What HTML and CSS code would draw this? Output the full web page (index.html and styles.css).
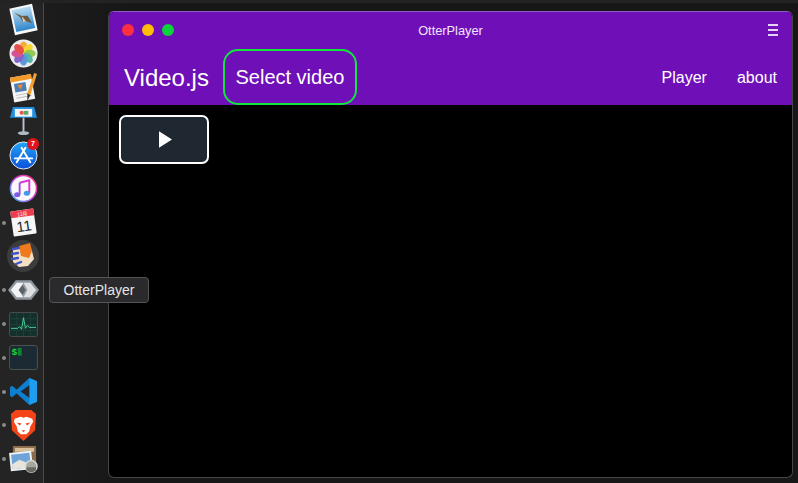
FILE: index.html
```html
<!DOCTYPE html>
<html lang="en">
<head>
<meta charset="utf-8">
<title>OtterPlayer</title>
<link rel="stylesheet" href="styles.css">
</head>
<body>
<div class="screen">
  <nav class="dock">
    <div class="dock-item"><svg class="icon" viewBox="0 0 30 32"><defs><linearGradient id="sky" x1="0" y1="0" x2="0" y2="1"><stop offset="0" stop-color="#b9dcf2"/><stop offset="1" stop-color="#2f86cc"/></linearGradient></defs><g transform="rotate(-12 15 16)"><rect x="3" y="2" width="24" height="28" fill="#f7f8fa"/><rect x="5" y="4" width="20" height="23" fill="url(#sky)"/><path d="M7 7l7 5 6 1 3 9-6-4-3 1-2-6z" fill="#6b5a43"/><path d="M14 12l3 6-3 1z" fill="#d9cdb6"/></g></svg></div>
    <div class="dock-item"><svg class="icon" viewBox="0 0 30 30"><circle cx="15" cy="15" r="14.500" fill="#ececec"/><g opacity=".9"><ellipse cx="15" cy="8.500" rx="4" ry="6" fill="#f6a623"/><ellipse cx="15" cy="8.500" rx="4" ry="6" fill="#f8d51c" transform="rotate(45 15 15)"/><ellipse cx="15" cy="8.500" rx="4" ry="6" fill="#8cc63f" transform="rotate(90 15 15)"/><ellipse cx="15" cy="8.500" rx="4" ry="6" fill="#45b39d" transform="rotate(135 15 15)"/><ellipse cx="15" cy="8.500" rx="4" ry="6" fill="#4a90d9" transform="rotate(180 15 15)"/><ellipse cx="15" cy="8.500" rx="4" ry="6" fill="#7b57c6" transform="rotate(225 15 15)"/><ellipse cx="15" cy="8.500" rx="4" ry="6" fill="#d6408f" transform="rotate(270 15 15)"/><ellipse cx="15" cy="8.500" rx="4" ry="6" fill="#e8403c" transform="rotate(315 15 15)"/></g></svg></div>
    <div class="dock-item"><svg class="icon" viewBox="0 0 30 32"><g transform="rotate(-10 13 17)"><rect x="3" y="4" width="22" height="26" fill="#f5f5f5"/><rect x="3" y="4" width="22" height="5" fill="#f09a2a"/><rect x="6" y="11" width="12" height="9" fill="#4a7fb8"/><path d="M9 13h6l-3 5z" fill="#f0872a"/><path d="M6 23h16M6 26h16" stroke="#bbb"/></g><path d="M26 1l3 1-7 22-3 3 0-5z" fill="#f0a030"/><path d="M19 22l3 2-3 6z" fill="#333"/></svg></div>
    <div class="dock-item"><svg class="icon" viewBox="0 0 30 32"><path d="M4 1h22l3 11H1z" fill="#1d8fe0"/><rect x="6" y="3" width="18" height="8" fill="#f2f4f6"/><circle cx="13" cy="7" r="2" fill="#e2574c"/><rect x="15" y="5" width="5" height="4" fill="#5aa86a"/><rect x="14" y="12" width="2" height="15" fill="#b9c2c9"/><ellipse cx="15" cy="28" rx="6" ry="2" fill="#aeb9c2"/></svg></div>
    <div class="dock-item"><svg class="icon" viewBox="0 0 30 30"><defs><linearGradient id="store" x1="0" y1="0" x2="0" y2="1"><stop offset="0" stop-color="#22a4f5"/><stop offset="1" stop-color="#0b50dc"/></linearGradient></defs><circle cx="15" cy="15" r="14" fill="url(#store)" stroke="#e8eef5"/><path d="M17 7L8 22M13 7l9 15M6 18h18" stroke="#fff" stroke-width="2" stroke-linecap="round" fill="none"/></svg><span class="badge">7</span></div>
    <div class="dock-item"><svg class="icon" viewBox="0 0 30 30"><defs><linearGradient id="ring" x1="0" y1="1" x2="1" y2="0"><stop offset="0" stop-color="#2fc3ee"/><stop offset=".5" stop-color="#c43ce0"/><stop offset="1" stop-color="#fb3c6a"/></linearGradient></defs><circle cx="15" cy="15" r="13.500" fill="#fbf7fb" stroke="url(#ring)" stroke-width="1.600"/><path d="M11 9l10-2.500v13.500" fill="none" stroke="#d63ad0" stroke-width="2"/><path d="M11 9v12" stroke="#9a50e0" stroke-width="2"/><ellipse cx="8.500" cy="21.500" rx="3.200" ry="2.600" fill="#7d5ce8"/><ellipse cx="18.500" cy="20" rx="3.200" ry="2.600" fill="#3f9ae8"/></svg></div>
    <div class="dock-item has-dot"><svg class="icon" viewBox="0 0 30 30"><g transform="rotate(-8 15 15)"><rect x="3" y="2" width="24" height="26" rx="1" fill="#f6f6f6"/><rect x="3" y="2" width="24" height="7" fill="#ef3b4e"/><text x="15" y="8" class="cal-month">12月</text><text x="15" y="24" class="cal-day">11</text></g></svg></div>
    <div class="dock-item"><svg class="icon icon-round" viewBox="0 0 32 32"><circle cx="16" cy="16" r="16" fill="#3c3c3c"/><path d="M6 9l16-4 3 6 2 8-6 7-9 1-6-5z" fill="#f4dfc4"/><path d="M12 6l11-3 2 8-3 7-8-2z" fill="#ee7a1e"/><path d="M6 9l6-1M5 14l6-1M5 19l6-1M9 24l5-2" stroke="#3d55c8" stroke-width="2.400" stroke-linecap="round"/></svg></div>
    <div class="dock-item has-dot"><svg class="icon icon-wide" viewBox="0 0 32 20"><path d="M8 0h16l8 10-8 10H8L0 10z" fill="#8f979e"/><path d="M9 2.500h7l-5 7.500 5 7.500H9L3 10z" fill="#f2f4f6"/><path d="M16 2.500h7l6 7.500-6 7.500h-7l4-7.500z" fill="#dde1e4"/><path d="M15 5l-4 5 4 5 3-5z" fill="#5a6066"/></svg></div>
    <div class="dock-item has-dot"><svg class="icon icon-term" viewBox="0 0 30 26"><rect x=".5" y=".5" width="29" height="25" rx="2" fill="#14302b" stroke="#4a4f50"/><path d="M1 7h28M1 13h28M1 19h28M8 1v24M15 1v24M22 1v24" stroke="#2a4a44" stroke-width=".6"/><path d="M2 17h7l2-2 2 3 2-12 2 11 2-3 2 2h7" stroke="#48d098" fill="none"/></svg></div>
    <div class="dock-item has-dot"><svg class="icon icon-term" viewBox="0 0 30 26"><rect x=".5" y=".5" width="29" height="25" rx="2.500" fill="#1b2a33" stroke="#4c5357"/><text x="2.500" y="10" class="term-prompt">$</text><rect x="9" y="3" width="4" height="8" fill="#0e8a2e"/></svg></div>
    <div class="dock-item has-dot"><svg class="icon" viewBox="0 0 30 30"><path d="M21 1l8 3.500v21L21 29 8 17l-5 4-2-1.500v-9L3 9l5 4z" fill="#0e7fcf"/><path d="M21 1l8 3.500v21L21 29z" fill="#1e9cf0"/><path d="M21 8.500L12 15l9 6.500z" fill="#23262a"/></svg></div>
    <div class="dock-item has-dot"><svg class="icon" viewBox="0 0 30 32"><path d="M7 0h16l5 4-1 17-12 11L3 21 2 4z" fill="#f4441a"/><path d="M6 9l6-2 3 1 3-1 6 2 1 3-3 5-1 5-3 3h-6l-3-3-1-5-3-5z" fill="#fff"/><path d="M8 13l5 1-2 2zM22 13l-5 1 2 2z" fill="#f4441a"/><path d="M13 21h4l-2 2z" fill="#f4441a"/></svg></div>
    <div class="dock-item has-dot"><svg class="icon" viewBox="0 0 30 30"><rect x="4" y="1" width="24" height="20" fill="#8a6a48"/><rect x="6" y="3" width="20" height="4" fill="#d8c09a"/><g transform="rotate(-6 13 17)"><rect x="1" y="7" width="23" height="19" fill="#eef2f5"/><rect x="3" y="9" width="19" height="15" fill="#6ea4d8"/><path d="M3 19l8-4 11 6v3H3z" fill="#e8e4da"/></g><circle cx="23" cy="22" r="6" fill="#a5a79f" stroke="#d8d8d8" stroke-width="1.500"/><path d="M18 23h10v3l-3 2h-4l-3-2z" fill="#6b6a62"/></svg></div>
  </nav>
  <div class="tooltip">OtterPlayer</div>
  <main class="window">
    <header class="header">
      <div class="titlebar">
        <div class="lights">
          <span class="light light-red"></span>
          <span class="light light-yellow"></span>
          <span class="light light-green"></span>
        </div>
        <div class="title">OtterPlayer</div>
        <div class="menu-icon"><span></span><span></span><span></span></div>
      </div>
      <div class="navbar">
        <a class="brand">Video.js</a>
        <a class="select-video">Select video</a>
        <div class="nav-right">
          <a class="nav-link">Player</a>
          <a class="nav-link">about</a>
        </div>
      </div>
    </header>
    <section class="player">
      <button class="play-button"><svg class="play-glyph" viewBox="0 0 14 18"><path d="M0 0l14 9-14 9z" fill="#fff"/></svg></button>
    </section>
  </main>
</div>
</body>
</html>
```
FILE: styles.css
```css
* { box-sizing: border-box; }
html, body { margin: 0; padding: 0; height: 100%; background: #1a1a1a; overflow: hidden; }
body { font-family: "Liberation Sans", Arial, sans-serif; }

.screen { position: relative; width: 798px; height: 483px; background: linear-gradient(90deg, #1f1f1f, #171717 16%, #171717); border-top: 3px solid #232323; overflow: hidden; }

.dock { width: 44px; height: 480px; background: #252425; border-right: 1px solid #4a4a4a; display: flex; flex-direction: column; }
.dock-item { position: relative; height: 33.800px; display: flex; align-items: center; justify-content: center; padding-left: 3px; flex: none; }
.icon { width: 29px; height: 31px; display: block; overflow: visible; }
.icon-round { width: 32px; height: 32px; }
.icon-wide { width: 31px; height: 20px; }
.icon-term { width: 29px; height: 25px; }
.has-dot::before { content: ""; position: absolute; left: 2px; top: 50%; width: 4px; height: 4px; margin-top: -2px; border-radius: 50%; background: #8a8a8a; }
.badge { position: absolute; left: 27px; top: 0; width: 12px; height: 12px; border-radius: 50%; background: #e0141c; color: #fff; font-size: 7px; line-height: 12px; text-align: center; font-weight: bold; }
.term-prompt { font: bold 10px "Liberation Mono", monospace; fill: #22d63c; }
.cal-month { font: 5px "Noto Sans CJK SC", sans-serif; fill: #fff; text-anchor: middle; }
.cal-day { font: 15px "Liberation Sans", sans-serif; fill: #222; text-anchor: middle; }

.tooltip { position: absolute; z-index: 2; left: 49px; top: 274px; width: 100px; height: 26px; background: #2a292b; border: 1px solid #555; border-radius: 4px; color: #e6e6e6; font-size: 14px; line-height: 24px; text-align: center; }

.window { position: absolute; left: 108px; top: 8px; width: 685px; height: 467px; background: #000; border: 1px solid #454545; border-top-color: #8d5cc0; border-radius: 6px; overflow: hidden; }
.header { background: #6f0fb8; height: 93px; display: flex; flex-direction: column; }
.titlebar { position: relative; height: 36px; display: flex; align-items: center; padding: 0 14px 0 13px; justify-content: space-between; flex: none; }
.lights { display: flex; gap: 8px; }
.light { width: 12px; height: 12px; border-radius: 50%; }
.light-red { background: #fc3040; }
.light-yellow { background: #fdbc06; }
.light-green { background: #0ad23a; }
.title { position: absolute; left: 0; right: 0; text-align: center; color: #f0e6f8; font-size: 12.800px; }
.menu-icon { display: flex; flex-direction: column; gap: 3px; width: 10px; }
.menu-icon span { height: 2px; background: #e6d2f4; }

.navbar { flex: 1; display: flex; align-items: stretch; color: #fff; padding-left: 15px; padding-right: 15px; }
.brand { font-size: 24px; align-self: center; margin-right: 14px; margin-top: 3px; }
.select-video { font-size: 20px; width: 134px; border: 2px solid #12e63c; border-radius: 15px; display: flex; align-items: center; justify-content: center; height: 56px; margin-top: 1px; }
.nav-right { margin-left: auto; display: flex; gap: 30px; align-items: center; }
.nav-link { font-size: 16px; margin-top: 3px; }

.player { padding: 10px; }
.play-button { width: 90px; height: 49px; background: #1f2731; border: 2px solid #fff; border-radius: 7px; padding: 0; display: flex; align-items: center; justify-content: center; }
.play-glyph { width: 13px; height: 17px; display: block; margin-left: 3px; }
```
